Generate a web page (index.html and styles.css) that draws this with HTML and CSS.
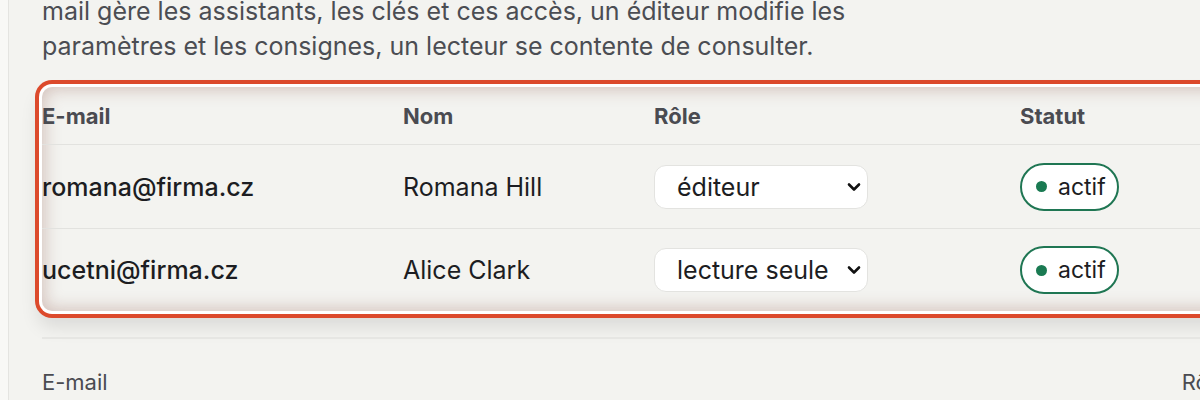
FILE: index.html
```html
<!DOCTYPE html>
<html lang="fr">
<head>
<meta charset="utf-8">
<link rel="stylesheet" href="styles.css">
</head>
<body>
<main class="panel">
  <p class="intro">mail gère les assistants, les clés et ces accès, un éditeur modifie les<br>paramètres et les consignes, un lecteur se contente de consulter.</p>

  <div class="callout">
    <table class="members">
      <colgroup>
        <col class="c-mail"><col class="c-name"><col class="c-role"><col class="c-status">
      </colgroup>
      <thead>
        <tr><th>E-mail</th><th>Nom</th><th>Rôle</th><th>Statut</th></tr>
      </thead>
      <tbody>
        <tr>
          <td class="mail">romana@firma.cz</td>
          <td>Romana Hill</td>
          <td><span class="select"><span>éditeur</span><svg viewBox="0 0 16 16" width="16" height="16"><path d="M3 5.5l5 5 5-5" fill="none" stroke="#111" stroke-width="2.6" stroke-linecap="round" stroke-linejoin="round"/></svg></span></td>
          <td><span class="badge"><i class="dot"></i>actif</span></td>
        </tr>
        <tr>
          <td class="mail">ucetni@firma.cz</td>
          <td>Alice Clark</td>
          <td><span class="select"><span>lecture seule</span><svg viewBox="0 0 16 16" width="16" height="16"><path d="M3 5.5l5 5 5-5" fill="none" stroke="#111" stroke-width="2.6" stroke-linecap="round" stroke-linejoin="round"/></svg></span></td>
          <td><span class="badge"><i class="dot"></i>actif</span></td>
        </tr>
      </tbody>
    </table>
  </div>

  <div class="below">
    <div class="below-head">
      <span>E-mail</span>
      <span class="below-role">Rôle</span>
    </div>
  </div>
</main>
</body>
</html>
```
FILE: styles.css
```css
html, body {
  margin: 0;
  padding: 0;
}
body {
  width: 1200px;
  height: 400px;
  overflow: hidden;
  background: #f8f8f6;
  font-family: Inter, "Noto Sans", "Liberation Sans", sans-serif;
}
.panel {
  margin-left: 8px;
  height: 400px;
  background: #f3f3f0;
  border-left: 1px solid #e4e4e1;
  padding-left: 33px;
  overflow: hidden;
}
.intro {
  margin: -6px 0 0 0;
  font-size: 25px;
  line-height: 35px;
  color: #4b4d53;
}
.callout {
  margin-top: 23px;
  width: 1300px;
  border-radius: 10px;
  background: #f3f3f0;
  box-shadow:
    0 0 0 3px #ffffff,
    0 0 0 7px #dc4a2c,
    0 12px 18px 4px rgba(0, 0, 0, 0.10),
    inset 0 0 16px 3px rgba(150, 95, 85, 0.32);
}
.members {
  border-collapse: collapse;
  table-layout: fixed;
  width: 1300px;
}
.c-mail { width: 361px; }
.c-name { width: 251px; }
.c-role { width: 366px; }
.members th {
  text-align: left;
  font-weight: 700;
  font-size: 22px;
  color: #4a4b51;
  padding: 0;
  height: 57px;
  border-bottom: 1px solid #e2e2df;
}
.members td {
  padding: 0;
  font-size: 25px;
  color: #1c1d22;
  height: 83px;
}
.members tbody tr:first-child td {
  border-bottom: 1px solid #e2e2df;
}
.members tbody tr:last-child td {
  height: 82px;
}
.members td.mail {
  font-weight: 500;
}
.select {
  display: inline-flex;
  align-items: center;
  justify-content: space-between;
  box-sizing: border-box;
  width: 214px;
  height: 44px;
  padding: 0 5px 0 22px;
  background: #ffffff;
  border: 1px solid #e3e3e0;
  border-radius: 12px;
  font-size: 25px;
  color: #1c1d22;
  vertical-align: middle;
}
.badge {
  display: inline-flex;
  align-items: center;
  box-sizing: border-box;
  height: 48px;
  padding: 0 11px 0 14px;
  border: 2px solid #1f7653;
  border-radius: 24px;
  background: #ffffff;
  font-size: 23px;
  color: #1c1d22;
  vertical-align: middle;
}
.dot {
  width: 11px;
  height: 11px;
  border-radius: 50%;
  background: #1a7a52;
  margin-right: 11px;
}
.below {
  margin-top: 26px;
  border-top: 2px solid #e6e6e3;
  width: 1300px;
}
.below-head {
  display: flex;
  padding-top: 30px;
  font-size: 22px;
  color: #4a4b51;
}
.below-role {
  margin-left: 1074px;
}
```
